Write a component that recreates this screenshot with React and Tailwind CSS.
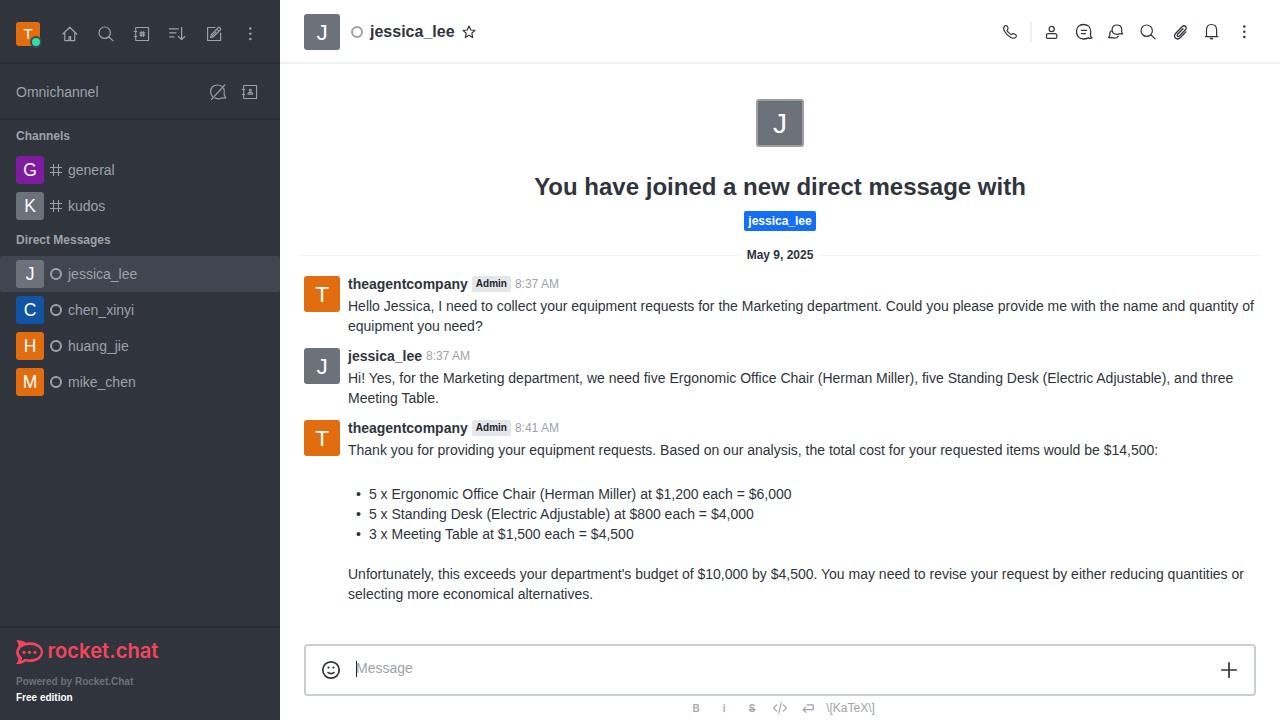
import React from "react";

function Icon({ children, w = 1.1, className = "size-5" }) {
  return (
    <svg viewBox="0 0 20 20" className={`shrink-0 ${className}`} fill="none" stroke="currentColor" strokeWidth={w} strokeLinecap="round" strokeLinejoin="round">
      {children}
    </svg>
  );
}

const Home = () => (
  <Icon w={1.2}>
    <path d="M2.8 10 9.8 3.2 16.7 10M4.8 8.6V16.6H14.7V8.6" />
    <path d="M9 16.2V12.5h1.6v3.7" />
  </Icon>
);
const Search = () => (
  <Icon w={1.2}>
    <circle cx="8.7" cy="8.7" r="5.7" />
    <path d="M12.8 12.8l4.300 4.100" />
  </Icon>
);
const Directory = () => (
  <Icon>
    <rect x="3.7" y="3.5" width="12.9" height="13" rx=".3" />
    <path d="M2.2 7.5h2.6M2.2 12.5h2.6" />
    <path d="M9.2 7.5v5M11.4 7.5v5M7.8 8.9h5M7.8 11.1h5" />
  </Icon>
);
const Sort = () => (
  <Icon w={1.2}>
    <path d="M1.500 4.800h8.800M1.500 8.800h6.600M1.500 12.800h4.600M13.600 3.600v12M10.400 12.500l3.200 3.200 3.200-3.200" />
  </Icon>
);
const Edit = () => (
  <Icon w={1.2}>
    <path d="M11 3.5H3.6v13h13V9" />
    <path d="M6.600 13.500l.7-2.800L14.200 3.600a1 1 0 0 1 1.400 0l.8.8a1 1 0 0 1 0 1.400L9.400 12.800zM12.800 5.200l2 2M8.300 11.800l3.800-3.900" />
  </Icon>
);
const Kebab = () => (
  <Icon>
    <g fill="currentColor" stroke="none">
      <circle cx="10.3" cy="4.600" r="1.250" />
      <circle cx="10.3" cy="9.800" r="1.250" />
      <circle cx="10.3" cy="15" r="1.250" />
    </g>
  </Icon>
);
const BubbleOff = () => (
  <Icon w={1.2}>
    <path d="M4.400 14.300A7 6.700 0 0 1 2.600 9.500C2.600 5.400 5.500 3 9.400 3c1.800 0 3.400.5 4.500 1.400M15.700 6.300c.7 1.300.7 3.400.4 5.700.1 1.800.7 2.800 1.800 3.700-1.300.6-2.500.4-3.600.1-2.300 1.300-5 1.300-7.300.2" />
    <path d="M3.500 17.300 16.800 3" />
  </Icon>
);
const Contacts = () => (
  <Icon>
    <rect x="3.7" y="3.5" width="12.9" height="13" rx=".3" />
    <path d="M2.200 7.500h2.600M2.200 12.500h2.600" />
    <circle cx="10.300" cy="8.300" r="1" />
    <path d="M8 12.300v-.7c0-.8.6-1 1.200-1h2.200c.7 0 1.200.3 1.200 1v.7z" />
  </Icon>
);
const Phone = () => (
  <Icon w={1.2}>
    <path d="M4.400 4.300c.8-.8 1.800-1.200 2.600-.3l1 1.700c.4.8.1 1.300-.7 2.100-.5.5 0 1.400 1.500 2.900s2.500 2.200 3 1.600c.7-.8 1.300-1 2-.6l1.900 1.100c.9.6.9 1.500.2 2.300-1.200 1.300-3 1.400-5.100.4-2.800-1.400-5-3.800-6.300-6.200-1-1.900-1.100-3.900-.1-5z" />
  </Icon>
);
const Person = () => (
  <Icon w={1.2}>
    <circle cx="9.700" cy="7" r="2.600" />
    <path d="M4.500 15.200v-1.700c0-1.300.9-1.900 2-1.900h6.300c1.200 0 2 .7 2 1.900v1.700c0 .8-.4 1.200-1.200 1.200H5.700c-.8 0-1.200-.4-1.200-1.200z" />
  </Icon>
);
const Thread = () => (
  <Icon w={1.300}>
    <path d="M9.500 2.500C5.200 2.500 2.500 5.300 2.500 9.500s2.700 7.500 7 7.500c1.800 0 3.300-.4 4.600-1.100 1.200.5 2.600.7 3.900.1-1.100-.9-1.600-2-1.600-3.200.3-1 .3-2 .3-3.300 0-4.200-2.900-7-7.200-7z" />
    <path d="M7.500 8.400h5M7.500 11.600h4" />
  </Icon>
);
const Discussion = () => (
  <Icon w={1.200}>
    <path d="M10.900 3C8 3 6.100 4.900 6.100 7.600c0 2.800 1.900 4.800 4.700 4.800 1.300 0 2.200-.3 3-.9 1 .6 1.900.7 2.900.3-.8-.7-1.200-1.500-1.100-2.500.1-.5.2-1 .2-1.700C15.800 4.900 13.900 3 10.900 3z" />
    <path d="M5.500 8.800c-1.500.7-1.900 2.100-1.600 3.700.1 1.300-.5 2.200-1.400 3 1.200.6 2.200.5 3.300-.1 2.600 1.400 5.600.7 6.500-1.400" />
  </Icon>
);
const Clip = () => (
  <Icon w={1.300}>
    <path d="M15.900 9.900l-5.400 5.600c-3.700 3.500-8.100-.7-4.700-4.300l6.300-6.500c2.500-2.400 5.700.6 3.300 3.100l-6 6.200c-1.400 1.300-3.100-.3-1.800-1.700l5.400-5.600" />
  </Icon>
);
const Bell = () => (
  <Icon w={1.2}>
    <path d="M4.500 14.500V8c0-3.400 1.900-5.500 5-5.500s5.100 2.100 5.100 5.500v6.500M3.300 14.600h12.600" />
    <path d="M8.300 16h2.700l-.5 1.200H8.800z" fill="currentColor" strokeWidth=".5" />
  </Icon>
);

function Avatar({ letter, color, size = "size-7 text-[17.5px]" }) {
  return <div className={`flex shrink-0 items-center justify-center rounded-[3px] text-white ${size} ${color}`}>{letter}</div>;
}

function Tool({ children }) {
  return <button className="flex size-7 items-center justify-center">{children}</button>;
}

const Ring = () => <span className="size-3 shrink-0 rounded-full border-2 border-[#9ea2a8]" />;

const Hash = () => (
  <svg viewBox="0 0 12 12" className="size-3 shrink-0" fill="none" stroke="currentColor" strokeWidth="1.1">
    <path d="M3.500 0v12M8.500 0v12M0 3.500h12M0 8.500h12" />
  </svg>
);

function Room({ letter, color, name, channel, active }) {
  return (
    <div className={`flex h-9 items-center pl-4 ${active ? "rounded-[3px] bg-[#404650]" : ""}`}>
      <Avatar letter={letter} color={color} />
      <span className="mr-1.5 ml-1.5 flex">{channel ? <Hash /> : <Ring />}</span>
      <span>{name}</span>
    </div>
  );
}

function Logo() {
  return (
    <svg viewBox="0 0 144 24" className="h-6 w-36 overflow-visible" aria-label="rocket.chat">
      <path d="M.3.500C3.800-.3 7.400.8 9.500 2.800 18.500.6 27 5 27 12.100c0 7.200-8.800 11.600-17.400 9.200C7 23.900 3.400 24.500 0 23.700c2-2 2.800-3.800 2.200-5.800C-.5 14.500-.4 9.700 2.400 6.400 2.900 4.500 2 2.500.3.500z" fill="#f5455c" />
      <path d="M14 4.900C7.500 4.900 2.900 7.800 2.900 12c0 2.200 1.300 4.100 3.300 5.400 0 1.400-.4 2.500-1.200 3.500 1.500-.4 2.600-1.100 3.500-2.200C16.300 20.800 24.800 17.800 24.800 12c0-4.200-4.600-7.100-10.800-7.100z" fill="#2f343d" />
      <g fill="#f5455c">
        <circle cx="8" cy="12.300" r="1.600" />
        <circle cx="13.500" cy="12.300" r="1.600" />
        <circle cx="19" cy="12.300" r="1.600" />
      </g>
      <text x="31.500" y="17.900" textLength="111" lengthAdjust="spacingAndGlyphs" fill="#f5455c" className="font-[Inter,sans-serif] text-[20.5px] font-semibold">rocket.chat</text>
    </svg>
  );
}

function Message({ letter, color, name, admin, time, children }) {
  return (
    <div className="flex gap-2 px-6 pt-1 pb-2">
      <Avatar letter={letter} color={color} size="size-9 pt-0.5 text-[22.5px]" />
      <div className="-mt-0.5 min-w-0 flex-1">
        <div className="flex h-5 items-center gap-1">
          <span className="font-bold">{name}</span>
          {admin && <span className="flex h-4 items-center rounded-[2px] bg-[#e4e7ea] px-1 text-[10px] font-bold text-[#1f2329]">Admin</span>}
          <span className="text-xs text-[#9ea2a8]">{time}</span>
        </div>
        <div className="mt-0.5">{children}</div>
      </div>
    </div>
  );
}

function Sidebar() {
  return (
    <aside className="flex w-[280px] shrink-0 flex-col bg-[#2f343d] text-[#9ea2a8]">
      <div className="flex h-16 items-center border-b-2 border-[#282c34] pt-1.5 pl-4">
        <div className="relative mr-4">
          <Avatar letter="T" color="bg-[#e26d0e]" size="size-6 text-[15px]" />
          <span className="absolute -right-[2px] -bottom-[2px] size-3 rounded-full border-2 border-[#404650] bg-[#2de0a5]" />
        </div>
        <div className="flex gap-2">
          <Tool><Home /></Tool>
          <Tool><Search /></Tool>
          <Tool><Directory /></Tool>
          <Tool><Sort /></Tool>
          <Tool><Edit /></Tool>
          <Tool><Kebab /></Tool>
        </div>
      </div>
      <div className="flex h-14 items-center border-b-2 border-[#282c34] pt-0.5 pr-4 pl-4">
        <span className="flex-1">Omnichannel</span>
        <div className="flex gap-1">
          <Tool><BubbleOff /></Tool>
          <Tool><Contacts /></Tool>
        </div>
      </div>
      <nav className="flex-1">
        <h3 className="flex h-8 items-center pl-4 text-xs font-bold">Channels</h3>
        <Room letter="G" color="bg-[#7f1b9f]" name="general" channel />
        <Room letter="K" color="bg-[#6c727a]" name="kudos" channel />
        <h3 className="flex h-8 items-center pl-4 text-xs font-bold">Direct Messages</h3>
        <Room letter="J" color="bg-[#6c727a]" name="jessica_lee" active />
        <Room letter="C" color="bg-[#1054a3]" name="chen_xinyi" />
        <Room letter="H" color="bg-[#e26d0e]" name="huang_jie" />
        <Room letter="M" color="bg-[#e26d0e]" name="mike_chen" />
      </nav>
      <footer className="h-[94px] border-t-2 border-[#282c34] px-4 pt-3 text-[10px] leading-4 font-bold">
        <Logo />
        <div className="mt-2.5 text-[#6c727a]">Powered by Rocket.Chat</div>
        <div className="text-white">Free edition</div>
      </footer>
    </aside>
  );
}

function Header() {
  return (
    <header className="flex h-16 shrink-0 items-center border-b-2 border-[#f0f1f2] pt-0.5 pr-[22px] pl-6">
      <Avatar letter="J" color="bg-[#6c727a]" size="size-9 pt-0.5 text-[22.5px]" />
      <span className="mr-[7px] ml-[11px] flex"><Ring /></span>
      <h1 className="text-base font-bold">jessica_lee</h1>
      <Icon className="ml-1 size-5" w={1.2}>
        <path d="M10 4l1.800 4 4.100.4-3.100 2.800.9 4.300-3.700-2.200-3.700 2.200.9-4.300-3.100-2.800 4.100-.4z" />
      </Icon>
      <div className="flex-1" />
      <Tool><Phone /></Tool>
      <span className="mr-1.5 ml-1.5 h-5 w-0.5 bg-[#eeeff1]" />
      <div className="flex gap-1">
        <Tool><Person /></Tool>
        <Tool><Thread /></Tool>
        <Tool><Discussion /></Tool>
        <Tool><Search /></Tool>
        <Tool><Clip /></Tool>
        <Tool><Bell /></Tool>
        <Tool><Kebab /></Tool>
      </div>
    </header>
  );
}

function Composer() {
  return (
    <div className="h-[76px] shrink-0 px-6">
      <div className="flex h-[52px] items-center rounded border-2 border-[#cbced1] px-[15px]">
        <Icon w={1.700}>
          <circle cx="10" cy="10" r="8.200" />
          <path d="M7 12.500c1.500 1.400 4.500 1.400 6 0" />
          <g fill="currentColor" stroke="none">
            <circle cx="7.500" cy="7.600" r="1.100" />
            <circle cx="12.500" cy="7.600" r="1.100" />
          </g>
        </Icon>
        <div className="mb-1 ml-[15px] flex flex-1 items-center text-[#9ea2a8]">
          <span className="-mr-px mt-0.5 h-4 w-px bg-[#1f2329]" />
          <span>Message</span>
        </div>
        <Icon w={1.700}>
          <path d="M10 2.800v14.400M2.800 10h14.400" />
        </Icon>
      </div>
      <div className="flex h-6 items-center justify-center pr-[3px] text-xs text-[#9ea2a8]">
        <span className="flex w-7 justify-center pt-px text-[10px] font-bold opacity-90">B</span>
        <span className="flex w-7 justify-center pt-px text-[10px] font-bold opacity-90">i</span>
        <span className="flex w-7 justify-center pt-px text-[10px] font-bold line-through opacity-90">S</span>
        <span className="flex w-7 justify-center">
          <Icon className="size-4" w={1.400}><path d="M6 6l-4 4 4 4M14 6l4 4-4 4M11.600 3.500l-3.200 13" /></Icon>
        </span>
        <span className="flex w-7 justify-center">
          <Icon className="size-4" w={1.500}><path d="M9 6h7.500v6H4M7.500 8.500L4 12l3.500 3.500" /></Icon>
        </span>
        <span className="ml-1">{"\\[KaTeX\\]"}</span>
      </div>
    </div>
  );
}

export default function App() {
  return (
    <div className="flex h-[720px] w-[1280px] overflow-hidden bg-white font-['Liberation_Sans',Arial,sans-serif] text-sm text-[#2f343d]">
      <Sidebar />
      <main className="flex min-w-0 flex-1 flex-col">
        <Header />
        <section className="min-h-0 flex-1">
          <div className="flex flex-col items-center pt-[35px]">
            <Avatar letter="J" color="bg-[#6c727a]" size="size-12 border-2 border-[#9e9e9e] pt-0.5 text-[28px]" />
            <h2 className="mt-6 text-2xl leading-8 font-bold">You have joined a new direct message with</h2>
            <span className="mt-2 flex h-5 items-center rounded-[2px] bg-[#156ff5] px-1 text-xs font-bold text-white">jessica_lee</span>
          </div>
          <div className="mt-4 mb-[9px] flex h-4 items-center gap-[7px] px-5 text-xs font-bold">
            <span className="h-px flex-1 bg-[#f0f1f3]" />
            <span>May 9, 2025</span>
            <span className="h-px flex-1 bg-[#f0f1f3]" />
          </div>
          <Message letter="T" color="bg-[#e26d0e]" name="theagentcompany" admin time="8:37 AM">
            Hello Jessica, I need to collect your equipment requests for the Marketing department. Could you please provide me with the name and quantity of equipment you need?
          </Message>
          <Message letter="J" color="bg-[#6c727a]" name="jessica_lee" time="8:37 AM">
            Hi! Yes, for the Marketing department, we need five Ergonomic Office Chair (Herman Miller), five Standing Desk (Electric Adjustable), and three Meeting Table.
          </Message>
          <Message letter="T" color="bg-[#e26d0e]" name="theagentcompany" admin time="8:41 AM">
            <p>Thank you for providing your equipment requests. Based on our analysis, the total cost for your requested items would be $14,500:</p>
            <ul className="mt-6 mb-5 pl-2">
              {[
                "5 x Ergonomic Office Chair (Herman Miller) at $1,200 each = $6,000",
                "5 x Standing Desk (Electric Adjustable) at $800 each = $4,000",
                "3 x Meeting Table at $1,500 each = $4,500",
              ].map((item) => (
                <li key={item} className="flex gap-2"><span>•</span><span>{item}</span></li>
              ))}
            </ul>
            <p>Unfortunately, this exceeds your department's budget of $10,000 by $4,500. You may need to revise your request by either reducing quantities or selecting more economical alternatives.</p>
          </Message>
        </section>
        <Composer />
      </main>
    </div>
  );
}
